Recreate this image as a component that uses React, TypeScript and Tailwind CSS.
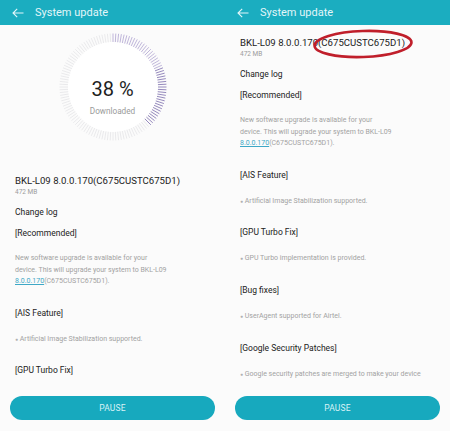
import React from 'react';

const sections = [
  { title: '[AIS Feature]', item: 'Artificial Image Stabilization supported.' },
  { title: '[GPU Turbo Fix]', item: 'GPU Turbo implementation is provided.' },
  { title: '[Bug fixes]', item: 'UserAgent supported for Airtel.' },
  { title: '[Google Security Patches]', item: 'Google security patches are merged to make your device' },
];

function Header() {
  return (
    <div className="h-[25px] bg-[#1badc0] flex items-center pl-[12px] shrink-0">
      <svg width="12" height="10" viewBox="0 0 12 10" fill="none" stroke="#e3f6f9" strokeWidth="1.1">
        <path d="M11.5 5H1M5.2 0.8L1 5l4.2 4.2" />
      </svg>
      <span className="ml-[11px] text-[11px] text-[#e3f6f9] leading-none">System update</span>
    </div>
  );
}

function Progress() {
  const total = 120;
  const done = Math.round(total * 0.38);
  const ticks = Array.from({ length: total }, (_, i) => {
    const a = (i / total) * Math.PI * 2 - Math.PI / 2;
    const c = Math.cos(a);
    const s = Math.sin(a);
    return (
      <line
        key={i}
        x1={60 + c * 45}
        y1={60 + s * 45}
        x2={60 + c * 53.5}
        y2={60 + s * 53.5}
        stroke={i < done ? (i < done / 2 ? '#b9aed6' : '#8a7db6') : '#e8e8ea'}
        strokeWidth="0.9"
      />
    );
  });
  return (
    <div className="h-[150px] flex flex-col items-center">
      <div className="relative mt-[2px] w-[120px] h-[120px]">
        <svg width="120" height="120" viewBox="0 0 120 120">
          <circle cx="60" cy="60" r="45" fill="#ffffff" />
          {ticks}
        </svg>
        <div className="absolute inset-0 flex flex-col items-center">
          <div className="mt-[50px] text-[20px] leading-[24px] text-[#1e1e1e]">38 %</div>
          <div className="mt-[5px] text-[8.2px] leading-[10px] text-[#9a9a9a]">Downloaded</div>
        </div>
      </div>
    </div>
  );
}

function Details({ count, ellipse }: { count: number; ellipse?: boolean }) {
  return (
    <div className="px-[15px]">
      <div className="relative text-[9.6px] leading-[12px] text-[#222]">
        BKL-L09 8.0.0.170(C675CUSTC675D1)
        {ellipse && (
          <svg className="absolute left-[71px] top-[-9px]" width="104" height="32" viewBox="0 0 104 32" fill="none">
            <ellipse cx="52" cy="16" rx="48.5" ry="13" stroke="#c01f2b" strokeWidth="2.6" transform="rotate(-2 52 16)" />
          </svg>
        )}
      </div>
      <div className="text-[6.5px] leading-[10px] text-[#9b9b9b]">472 MB</div>
      <div className="mt-[9px] text-[8.5px] leading-[12px] text-[#222]">Change log</div>
      <div className="mt-[9px] text-[8.5px] leading-[12px] text-[#222]">[Recommended]</div>
      <div className="mt-[14px] text-[7px] leading-[11.5px] text-[#a2a2a2]">
        New software upgrade is available for your
        <br />
        device. This will upgrade your system to BKL-L09
        <br />
        <span className="text-[#3ea8c6] underline">8.0.0.170</span>(C675CUSTC675D1).
      </div>
      {sections.slice(0, count).map((s, i) => (
        <div key={i}>
          <div className={`${i === 0 ? 'mt-[19px]' : 'mt-[19.5px]'} text-[8.5px] leading-[12px] text-[#222]`}>
            {s.title}
          </div>
          {(i < count - 1 || count === 4) && (
            <div className="mt-[15px] text-[7px] leading-[11px] text-[#a2a2a2] whitespace-nowrap">
              <span className="text-[5px] text-[#b0b0b0] align-middle">●</span> {s.item}
            </div>
          )}
        </div>
      ))}
    </div>
  );
}

function Panel({ left }: { left?: boolean }) {
  return (
    <div className="h-[431px] flex flex-col bg-[#fbfbfb] overflow-hidden">
      <Header />
      <div className="flex-1 overflow-hidden">
        {left ? <Progress /> : <div className="h-[12px]" />}
        <Details count={left ? 2 : 4} ellipse={!left} />
      </div>
      <div className="h-[41px] shrink-0 px-[10px] pt-[6px]">
        <div className="h-[24px] rounded-full bg-[#17a9be] flex items-center justify-center text-[8.5px] text-[#d9f3f7] tracking-[0.2px]">
          PAUSE
        </div>
      </div>
    </div>
  );
}

export default function App() {
  return (
    <div className="w-[450px] h-[431px] grid grid-cols-2 font-['Roboto',sans-serif]">
      <Panel left />
      <Panel />
    </div>
  );
}
